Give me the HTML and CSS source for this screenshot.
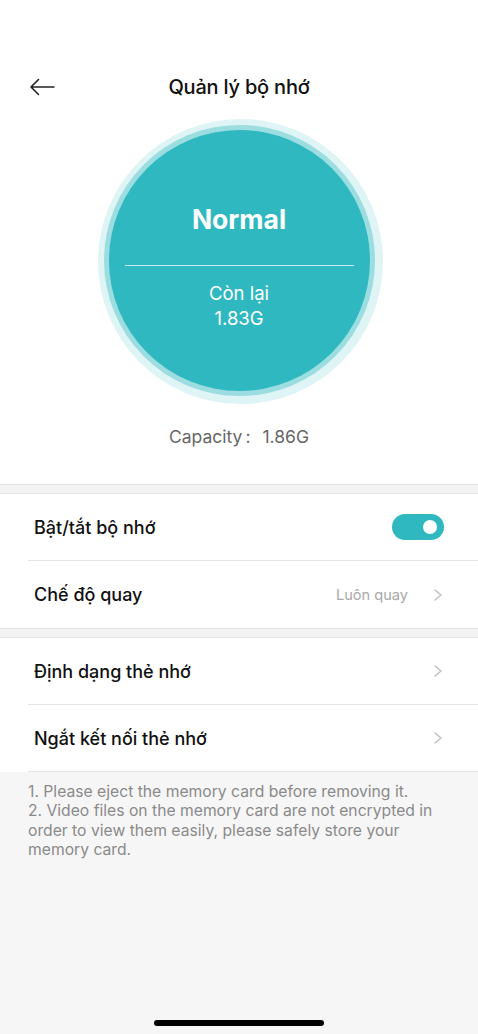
FILE: index.html
```html
<!DOCTYPE html>
<html lang="vi">
<head>
<meta charset="utf-8">
<title>Quản lý bộ nhớ</title>
<link rel="stylesheet" href="styles.css">
</head>
<body>
<div class="page">
  <section class="top">
    <header class="header">
      <button class="back" aria-label="Back">
        <svg width="26" height="18" viewBox="0 0 26 18" fill="none" stroke="#222" stroke-width="1.6" stroke-linecap="round" stroke-linejoin="round">
          <path d="M25 9H2M9.5 1.5L2 9l7.5 7.5"/>
        </svg>
      </button>
      <h1 class="title">Quản lý bộ nhớ</h1>
    </header>
    <div class="gauge">
      <div class="circle">
        <div class="status">Normal</div>
        <div class="circle-line"></div>
        <div class="remain">Còn lại</div>
        <div class="remain">1.83G</div>
      </div>
    </div>
    <div class="capacity"><span class="cap-label">Capacity</span><span class="cap-colon">:</span><span>1.86G</span></div>
  </section>

  <div class="band"></div>

  <section class="group">
    <div class="row">
      <span class="label">Bật/tắt bộ nhớ</span>
      <span class="toggle"><span class="knob"></span></span>
    </div>
    <div class="row">
      <span class="label">Chế độ quay</span>
      <span class="value">Luôn quay</span>
      <svg class="chev" width="8" height="12" viewBox="0 0 8 12" fill="none" stroke="#bdbdbd" stroke-width="1.3" stroke-linecap="round" stroke-linejoin="round"><path d="M1 1l6 5-6 5"/></svg>
    </div>
  </section>

  <div class="band"></div>

  <section class="group">
    <div class="row">
      <span class="label">Định dạng thẻ nhớ</span>
      <svg class="chev" width="8" height="12" viewBox="0 0 8 12" fill="none" stroke="#bdbdbd" stroke-width="1.3" stroke-linecap="round" stroke-linejoin="round"><path d="M1 1l6 5-6 5"/></svg>
    </div>
    <div class="row row-last">
      <span class="label">Ngắt kết nối thẻ nhớ</span>
      <svg class="chev" width="8" height="12" viewBox="0 0 8 12" fill="none" stroke="#bdbdbd" stroke-width="1.3" stroke-linecap="round" stroke-linejoin="round"><path d="M1 1l6 5-6 5"/></svg>
    </div>
  </section>

  <div class="notes">
    <p>1. Please eject the memory card before removing it.</p>
    <p>2. Video files on the memory card are not encrypted in order to view them easily, please safely store your memory card.</p>
  </div>

  <div class="home-indicator"></div>
</div>
</body>
</html>
```
FILE: styles.css
```css
* { box-sizing: border-box; }
html, body { margin: 0; padding: 0; }
body {
  font-family: Inter, "Noto Sans", "Liberation Sans", sans-serif;
  color: #111;
  background: #f6f6f6;
}
.page {
  width: 478px;
  min-height: 1034px;
  display: flex;
  flex-direction: column;
  background: #f6f6f6;
}
.top {
  background: #fff;
  padding-top: 62px;
  padding-bottom: 36px;
  display: flex;
  flex-direction: column;
  align-items: center;
}
.header {
  width: 100%;
  height: 50px;
  display: flex;
  align-items: center;
  justify-content: center;
  position: relative;
}
.back {
  position: absolute;
  left: 29px;
  top: 16px;
  border: 0;
  background: none;
  padding: 0;
  width: 26px;
  height: 18px;
  display: flex;
}
.title {
  margin: 0;
  font-size: 20px;
  font-weight: 500;
  letter-spacing: -0.2px;
  color: #111;
}
.gauge {
  margin-top: 18px;
  display: flex;
  justify-content: center;
}
.circle {
  width: 261px;
  height: 261px;
  border-radius: 50%;
  background: #30b8c0;
  box-shadow: 0 0 0 5px rgba(48, 184, 192, 0.38), 1px 1px 0 12px rgba(48, 184, 192, 0.16);
  display: flex;
  flex-direction: column;
  align-items: center;
  padding-top: 74px;
  color: #fff;
}
.status {
  font-size: 26.5px;
  font-weight: 700;
  line-height: 30px;
}
.circle-line {
  width: 229px;
  height: 1px;
  background: rgba(255, 255, 255, 0.75);
  margin-top: 31px;
  margin-bottom: 15px;
}
.remain {
  font-size: 18.5px;
  line-height: 25px;
  font-weight: 400;
}
.capacity {
  margin-top: 35px;
  font-size: 17.5px;
  line-height: 22px;
  color: #666;
  display: flex;
}
.cap-colon {
  margin: 0 12px 0 3px;
}
.band {
  height: 10px;
  background: #f3f3f3;
  border-top: 1px solid #e3e3e3;
  border-bottom: 1px solid #e6e6e6;
}
.group {
  background: #fff;
  padding-left: 28px;
}
.row {
  height: 67px;
  display: flex;
  align-items: center;
  padding-right: 34px;
  border-bottom: 1px solid #e4e4e4;
}
.group .row:last-child:not(.row-last) { border-bottom: 0; }
.label {
  flex: 1;
  padding-left: 6px;
  font-size: 18px;
  font-weight: 500;
  color: #111;
}
.value {
  font-size: 14.6px;
  color: #a8a8a8;
  margin-right: 26px;
}
.chev {
  margin-right: 2px;
}
.toggle {
  width: 52px;
  height: 26px;
  border-radius: 13px;
  background: #30b8c0;
  display: flex;
  align-items: center;
  justify-content: flex-end;
  padding-right: 7px;
}
.knob {
  width: 14px;
  height: 14px;
  border-radius: 50%;
  background: #fff;
}
.notes {
  padding: 10px 28px 0;
  font-size: 15.7px;
  line-height: 19.4px;
  color: #8a8a8a;
}
.notes p { margin: 0; }
.home-indicator {
  margin-top: auto;
  margin-bottom: 8px;
  align-self: center;
  width: 170px;
  height: 6px;
  border-radius: 3px;
  background: #000;
}
```
